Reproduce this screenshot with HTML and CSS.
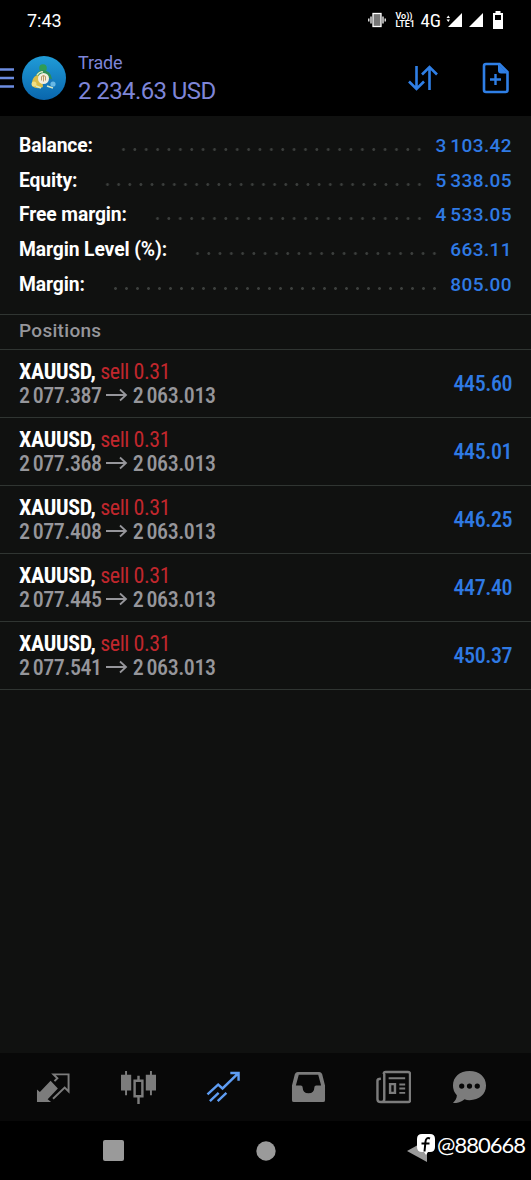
FILE: index.html
```html
<!DOCTYPE html>
<html lang="en">

<head>
    <meta charset="UTF-8">
    <meta name="viewport" content="width=device-width, initial-scale=1.0">
    <title>Trade</title>
    <link rel="stylesheet" href="styles.css">
</head>

<body>
    <div class="status-bar">
        <span class="clock">7:43</span>
        <div class="status-icons">
            <svg class="vibrate" width="18" height="16" viewBox="0 0 18 16">
                <rect x="5" y="1.5" width="8" height="13" fill="#777" stroke="#fff" stroke-width="1.3" />
                <path d="M3 4.5v7M15 4.5v7M.8 6.5v3M17.2 6.5v3" stroke="#fff" stroke-width="1.3" />
            </svg>
            <div class="volte"><span>Vo))</span><span>LTE1</span></div>
            <span class="network">4G</span>
            <svg class="signal" width="17" height="15" viewBox="0 0 17 15">
                <path d="M16 0v14H2z" fill="#fff" />
                <path d="M.5 5L2.3 2.5 4 5zM.5 6.500L2.300 9 4 6.500z" fill="#fff" />
            </svg>
            <svg class="signal-two" width="14" height="15" viewBox="0 0 14 15">
                <path d="M14 0v14H0z" fill="#fff" />
            </svg>
            <svg class="battery" width="12" height="18" viewBox="0 0 12 18">
                <path d="M3.500 0h5v2H11v16H1V2h2.500z" fill="#fff" />
                <path d="M3 4h6v5H3z" fill="#000" />
            </svg>
        </div>
    </div>

    <header class="header">
        <svg class="menu" width="14" height="22" viewBox="0 0 14 22">
            <path d="M0 2.500h14M0 11h14M0 19.500h14" stroke="#6c8ce0" stroke-width="2.600" />
        </svg>
        <svg class="logo" width="46" height="46" viewBox="0 0 46 46">
            <defs>
                <linearGradient id="disc" x1="0" y1="0" x2="0" y2="1">
                    <stop offset="0" stop-color="#209cd8" />
                    <stop offset="1" stop-color="#0966ad" />
                </linearGradient>
            </defs>
            <circle cx="23" cy="23" r="22" fill="url(#disc)" />
            <circle cx="22" cy="13" r="3.800" fill="#2f9c55" />
            <path d="M15 22q0-6 7-7 8 1 9 9l-8 4z" fill="#2c8e58" />
            <path d="M11 31q-1-8 5-11l5 2 1 10q-6 3-11-1z" fill="#d8bd49" />
            <path d="M23 32q0-7 5-9 6 2 6 9-5 2-11 0z" fill="#1778ba" />
            <circle cx="13" cy="29" r="2.500" fill="#f1df83" />
            <circle cx="32" cy="29" r="2.600" fill="#68b8e5" />
            <path d="M16 20q3-4 6-3M15 31l5 2M26 31l6 2" fill="none" stroke="#d7e9c5" stroke-width="1.500" />
            <circle cx="22.500" cy="23.500" r="5.500" fill="#f2eedf" />
            <path d="M20.500 25.500v-4q2-2 4 0v4M22.500 20.500v6" fill="none" stroke="#bc9a66" />
        </svg>
        <div class="title">
            <span class="title-name">Trade</span>
            <span class="title-sum">2 234.63 USD</span>
        </div>
        <svg class="sort" width="32" height="28" viewBox="0 0 32 28">
            <path d="M9.500 2v23M2 17.500L9.500 25l7.500-7.500M22.500 26V3M15 10.500L22.500 3l7.500 7.500" fill="none" stroke="#2f7fe6" stroke-width="2.600" />
        </svg>
        <svg class="new-order" width="27" height="32" viewBox="0 0 27 32">
            <path d="M4 2h13.500l8 8v18q0 2-2 2H4q-2 0-2-2V4q0-2 2-2z" fill="none" stroke="#2f7fe6" stroke-width="2.600" />
            <path d="M16 2l9.500 9.500H19q-3 0-3-3z" fill="#2f7fe6" />
            <path d="M13.500 12v11M8 17.500h11" stroke="#2f7fe6" stroke-width="2.400" />
        </svg>
    </header>

    <main class="content">
        <section class="account">
            <div class="account-row"><b>Balance:</b><i class="dots"></i><span class="sum">3&#8198;103.42</span></div>
            <div class="account-row"><b>Equity:</b><i class="dots"></i><span class="sum">5&#8198;338.05</span></div>
            <div class="account-row"><b>Free margin:</b><i class="dots"></i><span class="sum">4&#8198;533.05</span></div>
            <div class="account-row"><b>Margin Level (%):</b><i class="dots"></i><span class="sum">663.11</span></div>
            <div class="account-row"><b>Margin:</b><i class="dots"></i><span class="sum">805.00</span></div>
        </section>

        <h2 class="section-title">Positions</h2>

        <div class="position">
            <div class="deal">
                <p class="order"><b>XAUUSD,</b> <span class="sell">sell 0.31</span></p>
                <p class="prices">2&#8198;077.387 <svg class="arrow" viewBox="0 0 22 14"><path d="M0 7h20M14 1.500L20 7l-6 5.500" /></svg> 2&#8198;063.013</p>
            </div>
            <span class="profit">445.60</span>
        </div>
        <div class="position">
            <div class="deal">
                <p class="order"><b>XAUUSD,</b> <span class="sell">sell 0.31</span></p>
                <p class="prices">2&#8198;077.368 <svg class="arrow" viewBox="0 0 22 14"><path d="M0 7h20M14 1.500L20 7l-6 5.500" /></svg> 2&#8198;063.013</p>
            </div>
            <span class="profit">445.01</span>
        </div>
        <div class="position">
            <div class="deal">
                <p class="order"><b>XAUUSD,</b> <span class="sell">sell 0.31</span></p>
                <p class="prices">2&#8198;077.408 <svg class="arrow" viewBox="0 0 22 14"><path d="M0 7h20M14 1.500L20 7l-6 5.500" /></svg> 2&#8198;063.013</p>
            </div>
            <span class="profit">446.25</span>
        </div>
        <div class="position">
            <div class="deal">
                <p class="order"><b>XAUUSD,</b> <span class="sell">sell 0.31</span></p>
                <p class="prices">2&#8198;077.445 <svg class="arrow" viewBox="0 0 22 14"><path d="M0 7h20M14 1.500L20 7l-6 5.500" /></svg> 2&#8198;063.013</p>
            </div>
            <span class="profit">447.40</span>
        </div>
        <div class="position">
            <div class="deal">
                <p class="order"><b>XAUUSD,</b> <span class="sell">sell 0.31</span></p>
                <p class="prices">2&#8198;077.541 <svg class="arrow" viewBox="0 0 22 14"><path d="M0 7h20M14 1.500L20 7l-6 5.500" /></svg> 2&#8198;063.013</p>
            </div>
            <span class="profit">450.37</span>
        </div>
    </main>

    <nav class="tabs">
        <svg class="tab" viewBox="0 0 36 36">
            <path d="M1 33V20l3 2.500L15 11l7.500 8L12 30l3.500 3z" fill="#7c7c7c" />
            <path d="M17.500 29.500L29.500 18l4 4V4.500H18l4 4-3 3" fill="none" stroke="#7c7c7c" stroke-width="2" />
        </svg>
        <svg class="tab" viewBox="0 0 36 36">
            <path d="M0 5h10.500v16H0zM4.200 1h2v25h-2zM25.500 5H36v16H25.500zM29.800 1h2v25h-2z" fill="#7c7c7c" />
            <path d="M14 11h8v16h-8zM18 6v5M18 27v8" fill="none" stroke="#7c7c7c" stroke-width="2.500" />
        </svg>
        <svg class="tab" viewBox="0 0 36 36">
            <path d="M1.500 25l11-10 4.500 4L32.500 4M25 3h8.500v8M4 32l9-8.500M12 32l9-8.500" fill="none" stroke="#5e9cf2" stroke-width="2.500" />
        </svg>
        <svg class="tab" viewBox="0 0 36 36">
            <path d="M7 2h22q2 0 3 2l3 12v15q0 2-2 2H3q-2 0-2-2V16L4 4q1-2 3-2zM8 5L5 16h5q2 0 2 2 0 6 6 6t6-6q0-2 2-2h5L28 5z" fill="#7c7c7c" fill-rule="evenodd" />
        </svg>
        <svg class="tab" viewBox="0 0 36 36">
            <path d="M10 2h23q2 0 2 2v27q0 2-2 2H5q-3.500 0-3.500-3V11q0-2 3.500-2M8 4q0-2 2-2M8.500 4v26q0 3-3 3" fill="none" stroke="#7c7c7c" stroke-width="2.500" />
            <path d="M13 8.500h17M24 15h6M24 19h6M24 23.500h6" stroke="#7c7c7c" stroke-width="2" />
            <path d="M14.500 14.500h5v9h-5z" fill="none" stroke="#7c7c7c" stroke-width="2.500" />
        </svg>
        <svg class="tab" viewBox="0 0 36 36">
            <path d="M18 1c10 0 17 6 17 15s-7 15-17 15q-3 0-5-1-5 4-12 4 4-4 4-8-4-4-4-10C1 7 8 1 18 1z" fill="#7c7c7c" />
            <circle cx="10" cy="16.500" r="2.700" fill="#080808" />
            <circle cx="18" cy="16.500" r="2.700" fill="#080808" />
            <circle cx="26" cy="16.500" r="2.700" fill="#080808" />
        </svg>
    </nav>

    <div class="system-nav">
        <svg class="recent" width="22" height="22"><rect width="21" height="21" rx="2" fill="#9a9a9a" /></svg>
        <svg class="home" width="20" height="20"><circle cx="10" cy="10" r="9.700" fill="#9a9a9a" /></svg>
        <svg class="back" width="20" height="24" viewBox="0 0 20 24"><path d="M0 12L20 1v22z" fill="#9a9a9a" /></svg>
        <div class="watermark">
            <svg width="18" height="21" viewBox="0 0 18 21">
                <path d="M5 0h8q5 0 5 5v8q0 5-5 5h-2l-2 3-2-3H5q-5 0-5-5V5q0-5 5-5z" fill="#fff" />
                <path d="M13 4.500q-4-1.500-4.500 3l-1 10M4.500 9.500h8" fill="none" stroke="#000" stroke-width="2" />
            </svg>
            <span>@880668</span>
        </div>
    </div>
</body>
</html>
```
FILE: styles.css
```css
body {
    margin: 0;
    width: 531px;
    height: 1180px;
    background-color: #000000;
    font-family: "Roboto", "Liberation Sans", sans-serif;
    display: flex;
    flex-direction: column;
    overflow: hidden;
}

p, h2 {
    margin: 0;
}

svg {
    display: block;
    flex-shrink: 0;
}

.status-bar {
    height: 40px;
    padding: 0 27px;
    box-sizing: border-box;
    display: flex;
    align-items: center;
    justify-content: space-between;
    color: #ffffff;
}

.clock {
    font-size: 18px;
}

.status-icons {
    display: flex;
    align-items: center;
}

.volte {
    display: flex;
    flex-direction: column;
    font-size: 9px;
    line-height: 8px;
    font-weight: 600;
    width: 20px;
    margin-left: 9px;
}

.network {
    font-size: 19px;
    font-stretch: 80%;
    margin: 0 5px 0 5px;
}

.signal-two {
    margin-left: 6px;
}

.battery {
    margin-left: 9px;
}

.header {
    height: 76px;
    display: flex;
    align-items: center;
}

.logo {
    margin-left: 7px;
}

.title {
    margin-left: 11px;
    padding-top: 2px;
    flex: 1;
    display: flex;
    flex-direction: column;
    color: #7e85d8;
}

.title-name {
    font-size: 18px;
    line-height: 24px;
    letter-spacing: -0.2px;
}

.title-sum {
    font-size: 24px;
    line-height: 32px;
    letter-spacing: -0.6px;
}

.new-order {
    margin: 0 22px 0 43px;
}

.content {
    flex: 1;
    background-color: #101110;
}

.account {
    padding: 12px 19px 12px;
    height: 174px;
}

.account-row {
    height: 34.7px;
    display: flex;
    align-items: center;
    font-size: 19.3px;
    letter-spacing: -0.1px;
    color: #ffffff;
}

.dots {
    flex: 1;
    height: 3px;
    margin: 8px 10px 0 25px;
    background: radial-gradient(circle, #3c3f3d 1px, transparent 1.8px) 0 0 / 11px 3px space no-repeat;
}

.sum {
    color: #2f7ae4;
    font-size: 19px;
    font-weight: 500;
    letter-spacing: 0.4px;
}

.section-title {
    height: 34px;
    line-height: 32px;
    padding-left: 19px;
    border-top: 1px solid #303532;
    border-bottom: 1px solid #303532;
    color: #96969b;
    font-size: 19px;
    font-weight: 500;
    letter-spacing: 0.3px;
}

.position {
    height: 67px;
    padding: 0 19px;
    border-bottom: 1px solid #303532;
    display: flex;
    align-items: center;
    justify-content: space-between;
    font-size: 22px;
    font-stretch: 75%;
    letter-spacing: -0.45px;
}

.order, .prices {
    line-height: 24px;
    white-space: nowrap;
}

.order {
    color: #ffffff;
}

.order b {
    letter-spacing: -0.3px;
}

.sell {
    color: #c1272d;
}

.prices {
    color: #96969b;
    font-weight: 500;
}

.arrow {
    display: inline-block;
    width: 22px;
    height: 14px;
    vertical-align: 1px;
    fill: none;
    stroke: #96969b;
    stroke-width: 1.8;
}

.profit {
    color: #2f7ae4;
    font-weight: 500;
}

.tabs {
    height: 68px;
    background-color: #080808;
    display: flex;
    align-items: center;
    padding-left: 36px;
    gap: 50px;
}

.tab {
    width: 35px;
    height: 35px;
}

.tab:last-child {
    margin-left: -9px;
}

.system-nav {
    height: 59px;
    display: flex;
    align-items: center;
    position: relative;
}

.recent {
    margin-left: 103px;
}

.home {
    margin-left: 131px;
}

.back {
    margin-left: 131px;
}

/* sits over the back button */
.watermark {
    position: absolute;
    right: 6px;
    top: 10px;
    display: flex;
    align-items: center;
    gap: 2px;
    color: #ffffff;
    font-family: "Lato", sans-serif;
    font-size: 22px;
    letter-spacing: -1px;
}
```
